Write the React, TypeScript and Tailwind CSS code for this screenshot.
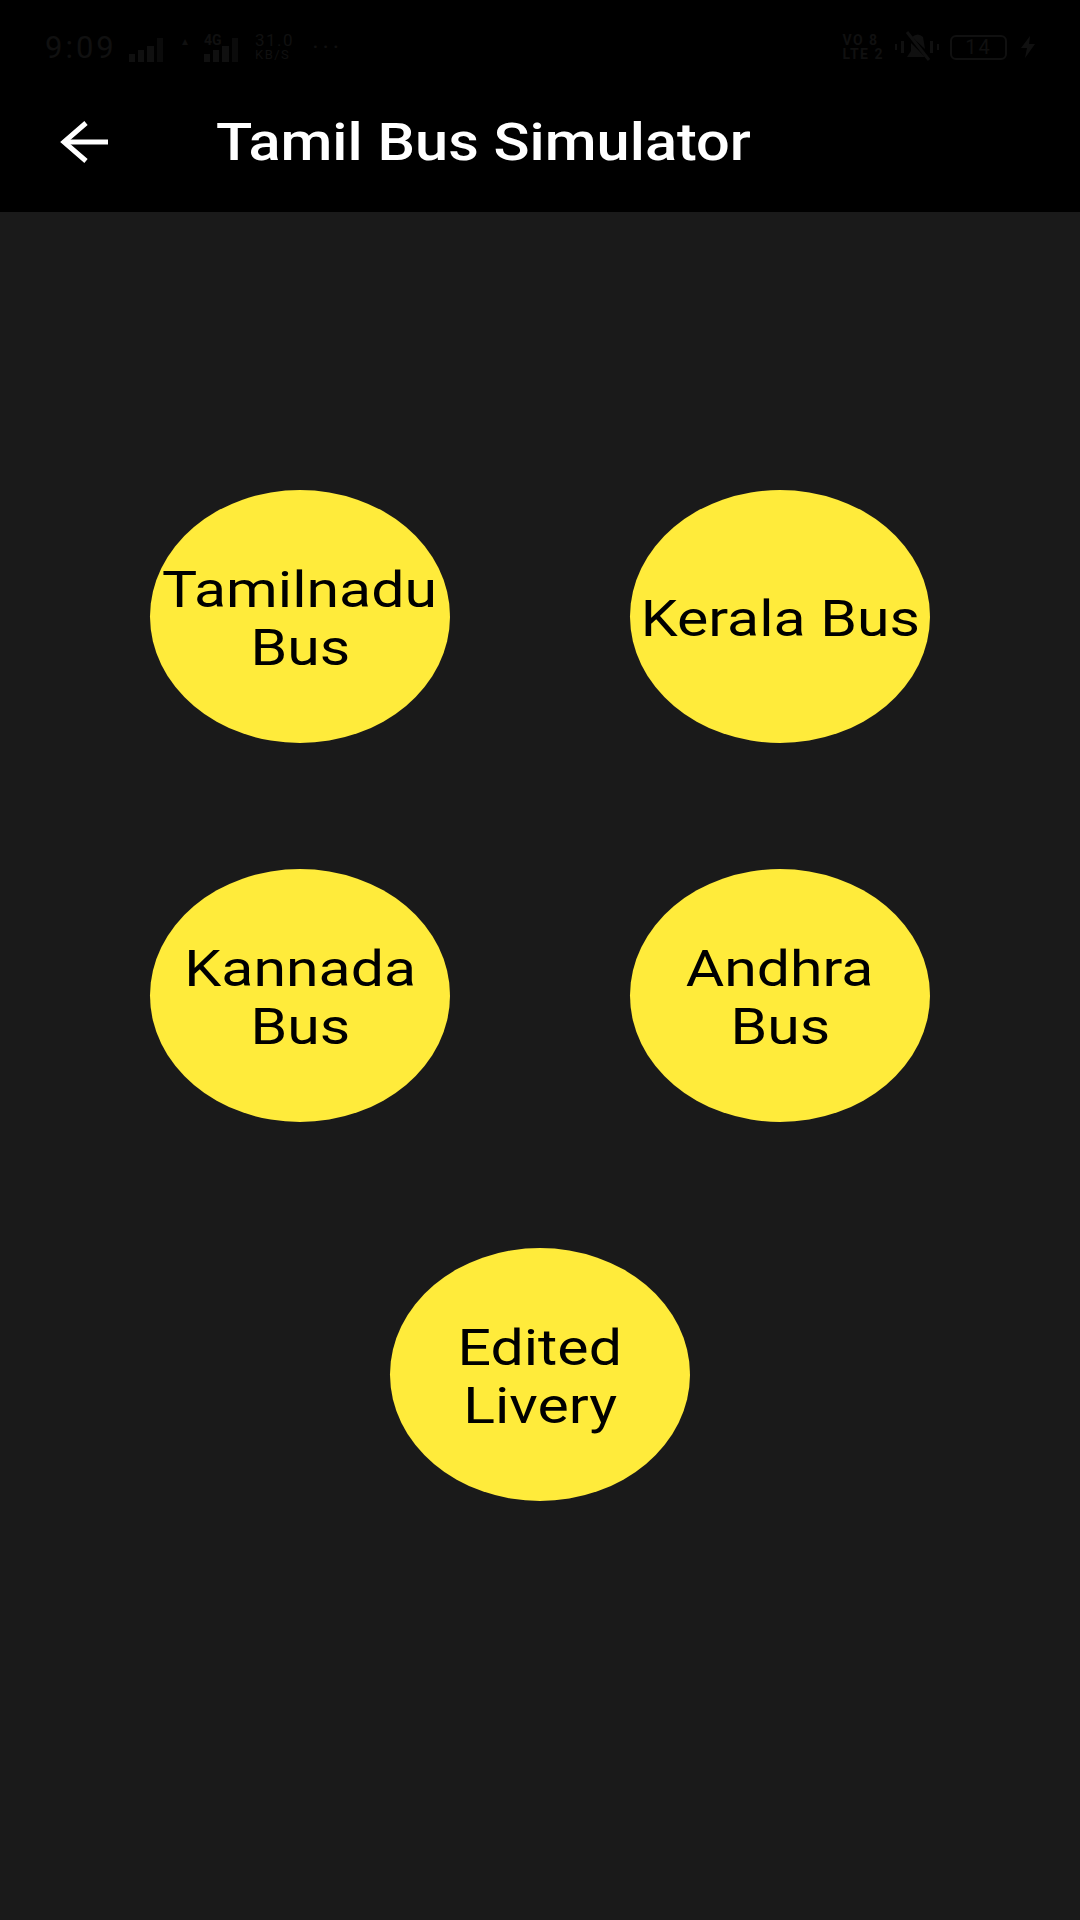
import React from 'react';

const rows = [
  [['Tamilnadu', 'Bus'], ['Kerala Bus']],
  [['Kannada', 'Bus'], ['Andhra', 'Bus']],
  [['Edited', 'Livery']],
];

const Bars = () => (
  <div className="flex items-end gap-[3px] h-[25px]">
    <div className="w-[6px] h-[8px] bg-[#101010]" />
    <div className="w-[6px] h-[12px] bg-[#101010]" />
    <div className="w-[7px] h-[16px] bg-[#101010]" />
    <div className="w-[6px] h-[24px] bg-[#0b0b0b]" />
  </div>
);

const StatusBar = () => (
  <div className="h-[92px] flex items-center justify-between pl-[45px] pr-[44px] pt-[2px] text-[#101010]">
    <div className="flex items-center">
      <span className="w-[69px] text-[31px] leading-none tracking-[3px] whitespace-nowrap">9:09</span>
      <div className="ml-[15px] mt-[4px]"><Bars /></div>
      <span className="ml-[19px] w-[8px] text-[12px] leading-none -mt-[12px]">▴</span>
      <div className="relative ml-[14px] mt-[4px]">
        <Bars />
        <span className="absolute left-0 -top-[4px] text-[14px] leading-none font-bold">4G</span>
      </div>
      <div className="ml-[17px] flex flex-col">
        <span className="text-[17px] leading-[15px] tracking-[1.5px]">31.0</span>
        <span className="text-[13px] leading-[13px] tracking-[1.5px]">KB/S</span>
      </div>
      <span className="ml-[18px] text-[24px] leading-none tracking-[4px]">···</span>
    </div>
    <div className="flex items-center">
      <div className="flex flex-col text-[14px] leading-[14px] font-bold mr-[10px] tracking-[1.5px]">
        <span>VO 8</span>
        <span>LTE 2</span>
      </div>
      <svg width="46" height="36" viewBox="0 0 46 36" fill="#101010" className="mr-[10px]">
        <path d="M15 12 L31 28 H13 L17 22 V14 Z" />
        <path d="M18 8 Q24 3 29 8 L31 20 Z" />
        <path d="M13 3 L35 31" stroke="#101010" strokeWidth="3" />
        <rect x="1" y="15" width="2" height="6" />
        <rect x="7" y="12" width="3" height="12" />
        <rect x="36" y="12" width="3" height="12" />
        <rect x="43" y="15" width="2" height="6" />
      </svg>
      <div className="w-[57px] h-[25px] rounded-[6px] border-2 border-[#101010] flex items-center justify-center text-[20px] leading-none tracking-[2px]">
        14
      </div>
      <svg width="16" height="22" viewBox="0 0 16 22" fill="#101010" className="ml-[13px]">
        <path d="M10 0 L1 12 H7 L5 22 L15 8 H9 Z" />
      </svg>
    </div>
  </div>
);

export default function App() {
  return (
    <div className="w-[1080px] h-[1920px] flex flex-col bg-[#1a1a1a] font-['Roboto',sans-serif]">
      <div className="h-[212px] bg-black shrink-0">
        <StatusBar />
        <div className="h-[100px] flex items-center pl-[60px]">
          <svg width="50" height="42" viewBox="0 0 50 42" fill="none" stroke="white" strokeWidth="5" className="shrink-0">
            <path d="M26 2 L4 21 L26 40" />
            <path d="M4 21 H48" />
          </svg>
          <h1 className="ml-[106px] text-[51px] leading-none font-medium text-white origin-left scale-x-[1.167] whitespace-nowrap">
            Tamil Bus Simulator
          </h1>
        </div>
      </div>
      <div className="flex flex-col items-center gap-[126px] pt-[278px]">
        {rows.map((row) => (
          <div key={row[0][0]} className="flex gap-[180px]">
            {row.map((lines) => (
              <div
                key={lines[0]}
                className="w-[300px] h-[253px] rounded-[50%] bg-[#ffeb3b] flex flex-col items-center justify-center pt-[4px] text-center text-black text-[50px] leading-[58px]"
              >
                {lines.map((line) => (
                  <span key={line} className="block scale-x-[1.18] whitespace-nowrap">
                    {line}
                  </span>
                ))}
              </div>
            ))}
          </div>
        ))}
      </div>
    </div>
  );
}
